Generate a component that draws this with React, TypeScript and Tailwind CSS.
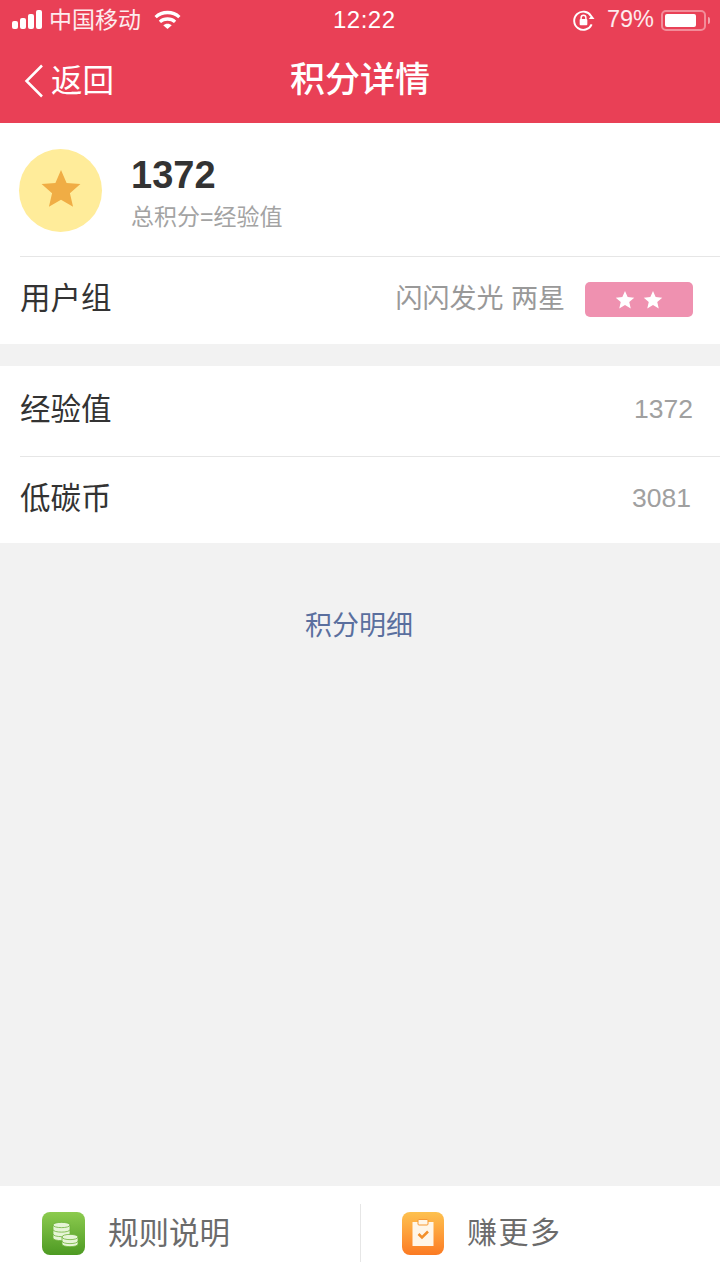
import React from 'react';

const FONT = "font-['Liberation_Sans','Noto_Sans_CJK_SC',sans-serif]";

function Star({ className }: { className: string }) {
  return (
    <svg viewBox="0 0 24 24" className={className} fill="currentColor">
      <path d="M12 1.200l3.200 7.300 7.900.7-6 5.200 1.800 7.800L12 18.100l-6.900 4.100 1.800-7.800-6-5.200 7.900-.7z" />
    </svg>
  );
}

function StatusBar() {
  return (
    <div className="h-10 flex items-center text-white relative">
      <div className="flex items-end gap-[2px] ml-3 h-5 pb-[1px]">
        <div className="w-[6px] h-[8px] rounded-[2px] bg-white" />
        <div className="w-[6px] h-[11px] rounded-[2px] bg-white" />
        <div className="w-[6px] h-[15px] rounded-[2px] bg-white" />
        <div className="w-[6px] h-[19px] rounded-[2px] bg-white" />
      </div>
      <span className="ml-[7px] text-[23px] leading-none text-white/90">中国移动</span>
      <svg viewBox="0 0 28 20" className="w-[27px] h-[19px] ml-[13px] mt-[-2px]" fill="none" stroke="currentColor" strokeWidth="3.500">
        <path d="M1.500 7.500C8.500 1 19.500 1 26.500 7.500" />
        <path d="M6 12.500c4.500-4 11.500-4 16 0" />
        <path d="M9.500 16 14 20l4.500-4c-2.200-2.200-6.800-2.200-9 0z" fill="currentColor" stroke="none" />
      </svg>
      <span className="absolute left-[333px] top-[7px] text-[24px] leading-[26px] tracking-[0.5px]">12:22</span>
      <div className="ml-auto flex items-center mr-[10px]">
        <svg viewBox="0 0 24 24" className="w-[23px] h-[23px]" fill="none" stroke="currentColor" strokeWidth="2">
          <path d="M20 7.500A9.500 9.500 0 1 0 20.500 16" />
          <path d="M17.500 10.500h6l-3-4z" fill="currentColor" stroke="none" />
          <rect x="8" y="10.500" width="8" height="6.500" rx="1" fill="currentColor" stroke="none" />
          <path d="M9.500 10.500V9a2.500 2.500 0 0 1 5 0v1.500" strokeWidth="1.500" />
        </svg>
        <span className="ml-[12px] text-[23.5px] leading-none text-white/90">79%</span>
        <div className="ml-[7px] w-[45px] h-[21px] rounded-[5px] border-2 border-white/40 p-[2px] flex">
          <div className="w-[31px] h-full rounded-[2px] bg-white" />
        </div>
        <div className="ml-[2px] w-[2px] h-[7px] rounded-r-full bg-white/50" />
      </div>
    </div>
  );
}

function NavBar() {
  return (
    <div className="h-[83px] relative flex items-center justify-center text-white">
      <div className="absolute left-[24px] top-[24px] flex items-center">
        <svg viewBox="0 0 20 34" className="w-[20px] h-[34px]" fill="none" stroke="currentColor" strokeWidth="2.500">
          <path d="M18 1.500 2.500 17 18 32.500" />
        </svg>
        <span className="ml-[7px] mt-[2px] text-[31.500px] leading-none">返回</span>
      </div>
      <span className="text-[35px] leading-none pb-[4px] font-medium">积分详情</span>
    </div>
  );
}

export default function App() {
  return (
    <div className={`${FONT} w-[720px] h-[1280px] flex flex-col bg-[#f2f2f2] overflow-hidden`}>
      <div className="bg-[#e94056]">
        <StatusBar />
        <NavBar />
      </div>

      <div className="bg-white">
        <div className="h-[134px] flex items-center ml-5 border-b border-[#e6e6e6]">
          <div className="w-[83px] h-[83px] ml-[-1px] mt-[2px] rounded-full bg-[#ffec9a] flex items-center justify-center text-[#f0ad45]">
            <Star className="w-[42px] h-[42px] mb-[3px]" />
          </div>
          <div className="ml-[29px] mt-[5px]">
            <div className="text-[38px] leading-[42px] font-bold text-[#333333]">1372</div>
            <div className="mt-[8px] text-[23px] leading-[26px] text-[#a3a3a3]">总积分=经验值</div>
          </div>
        </div>
        <div className="h-[87px] flex items-center justify-between pl-5 pr-[27px] pb-[5px]">
          <span className="text-[30.500px] leading-none text-[#333333]">用户组</span>
          <div className="flex items-center mt-[3px]">
            <span className="text-[27px] leading-none text-[#999999] mb-[1px]">闪闪发光 两星</span>
            <div className="ml-[20px] w-[108px] h-[35px] rounded-[5px] bg-[#ef91b0] flex items-center justify-center gap-[8px] text-white">
              <Star className="w-[20px] h-[20px]" />
              <Star className="w-[20px] h-[20px]" />
            </div>
          </div>
        </div>
      </div>

      <div className="mt-[22px] bg-white">
        <div className="h-[91px] flex items-center justify-between ml-5 pr-[27px] pb-[3px] border-b border-[#e6e6e6]">
          <span className="text-[30.500px] leading-none text-[#333333]">经验值</span>
          <span className="text-[26.500px] leading-none text-[#a0a0a0]">1372</span>
        </div>
        <div className="h-[86px] flex items-center justify-between pl-5 pr-[27px] pb-[4px]">
          <span className="text-[30.500px] leading-none text-[#333333]">低碳币</span>
          <span className="text-[26.500px] leading-none text-[#a0a0a0] mr-[2px]">3081</span>
        </div>
      </div>

      <div className="flex-1">
        <div className="mt-[66px] pr-[2px] text-center text-[27px] leading-[34px] text-[#5a6f9e]">积分明细</div>
      </div>

      <div className="h-[94px] bg-white flex items-center">
        <div className="flex-1 flex items-center pl-[42px]">
          <div className="w-[43px] h-[43px] rounded-[8px] bg-gradient-to-b from-[#8ccb4e] to-[#4d9a22] flex items-center justify-center">
            <svg viewBox="0 0 30 30" className="w-[30px] h-[30px]" fill="#e6f4d6" stroke="#6db33a" strokeWidth="0.800">
              <path d="M4 7c0-3.500 17-3.500 17 0v13c0 3.500-17 3.500-17 0z" />
              <path d="M4 7c0 3.500 17 3.500 17 0M4 11.500c0 3.500 17 3.500 17 0M4 16c0 3.500 17 3.500 17 0" fill="none" />
              <path d="M13 19c0-3.500 16-3.500 16 0v7c0 3.500-16 3.500-16 0z" />
              <path d="M13 19c0 3.500 16 3.500 16 0M13 23c0 3.500 16 3.500 16 0" fill="none" />
            </svg>
          </div>
          <span className="ml-[23px] text-[30.500px] leading-none text-[#6b6b6b]">规则说明</span>
        </div>
        <div className="w-px h-[58px] bg-[#e6e6e6]" />
        <div className="flex-1 flex items-center pl-[41px]">
          <div className="w-[42px] h-[43px] rounded-[8px] bg-gradient-to-b from-[#fdc14f] to-[#fb7a22] flex items-center justify-center">
            <svg viewBox="0 0 30 30" className="w-[30px] h-[30px]">
              <rect x="4.500" y="4" width="21" height="24" fill="#fff6e8" />
              <rect x="10" y="1.500" width="10" height="5.500" rx="1" fill="#fff6e8" stroke="#f79a33" strokeWidth="1" />
              <path d="M10.500 16l3.500 3.500 6-6" fill="none" stroke="#f3902b" strokeWidth="2.500" />
            </svg>
          </div>
          <span className="ml-[23px] text-[30px] leading-none text-[#6b6b6b] tracking-[1.500px]">赚更多</span>
        </div>
      </div>
    </div>
  );
}
